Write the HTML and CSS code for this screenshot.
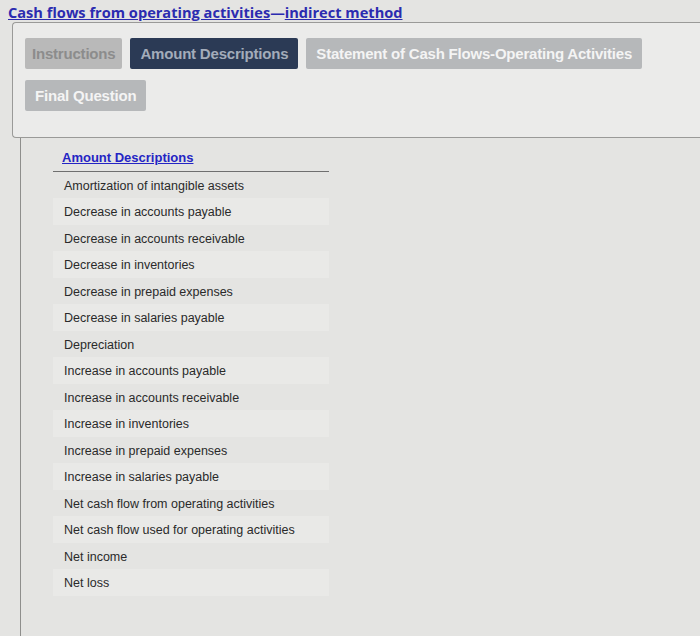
FILE: index.html
```html
<!DOCTYPE html>
<html lang="en">
<head>
    <meta charset="UTF-8">
    <title>Cash flows from operating activities</title>
    <link rel="stylesheet" href="styles.css">
</head>
<body>
    <!-- Page title -->
    <h1 class="page-title">
        <a href="#">Cash flows from operating activities</a>&mdash;<a href="#">indirect method</a>
    </h1>

    <!-- Tabs -->
    <div class="tab-panel">
        <div class="tab-list">
            <button class="tab first">Instructions</button>
            <button class="tab active">Amount Descriptions</button>
            <button class="tab light">Statement of Cash Flows-Operating Activities</button>
            <button class="tab light">Final Question</button>
        </div>
    </div>

    <!-- Tab content -->
    <div class="tab-content">
        <table class="amount-table">
            <thead>
                <tr><th><a href="#">Amount Descriptions</a></th></tr>
            </thead>
            <tbody>
                <tr><td>Amortization of intangible assets</td></tr>
                <tr><td>Decrease in accounts payable</td></tr>
                <tr><td>Decrease in accounts receivable</td></tr>
                <tr><td>Decrease in inventories</td></tr>
                <tr><td>Decrease in prepaid expenses</td></tr>
                <tr><td>Decrease in salaries payable</td></tr>
                <tr><td>Depreciation</td></tr>
                <tr><td>Increase in accounts payable</td></tr>
                <tr><td>Increase in accounts receivable</td></tr>
                <tr><td>Increase in inventories</td></tr>
                <tr><td>Increase in prepaid expenses</td></tr>
                <tr><td>Increase in salaries payable</td></tr>
                <tr><td>Net cash flow from operating activities</td></tr>
                <tr><td>Net cash flow used for operating activities</td></tr>
                <tr><td>Net income</td></tr>
                <tr><td>Net loss</td></tr>
            </tbody>
        </table>
    </div>
</body>
</html>
```

FILE: styles.css
```css
* {
    margin: 0;
    padding: 0;
    box-sizing: border-box;
}

body {
    background-color: #e4e4e2;
    color: #333;
    font-family: 'Liberation Sans', Arial, sans-serif;
    height: 636px;
    overflow: hidden;
}

.page-title {
    font-family: 'Open Sans', sans-serif;
    font-size: 14.6px;
    font-weight: 700;
    color: #2b2bb0;
    padding: 3px 8px 0;
    height: 22px;
    line-height: 18px;
}

.page-title a {
    color: #2b2bb0;
}

.tab-panel {
    margin-left: 12px;
    background: #ebebea;
    border: 1px solid #9a9a98;
    border-right: none;
    border-radius: 4px 0 0 4px;
    padding: 15px 12px 26px;
}

.tab-list {
    display: flex;
    flex-wrap: wrap;
    gap: 11px 8px;
}

.tab {
    font-family: 'Liberation Sans', Arial, sans-serif;
    font-size: 15px;
    font-weight: 700;
    letter-spacing: -0.2px;
    height: 31px;
    padding: 0 10px;
    border: none;
    border-radius: 2px;
    background: #b9b9b9;
    color: #8c8c8c;
}

.tab.first {
    padding: 0 7px;
}

.tab.active {
    background: #2b3a55;
    color: #a3acba;
}

.tab.light {
    color: #f4f4f4;
    background: #b6b8ba;
}

.tab-content {
    margin-left: 20px;
    border-left: 1px solid #8e8e8c;
    height: 520px;
    padding: 8px 0 0 32px;
}

.amount-table {
    width: 276px;
    border-collapse: collapse;
    font-size: 12.5px;
}

.amount-table th {
    text-align: left;
    font-size: 13px;
    font-weight: 700;
    padding: 4px 9px 6px;
    border-bottom: 1px solid #6f6f6f;
}

.amount-table th a {
    color: #2424c4;
}

.amount-table td {
    height: 26.5px;
    padding: 2px 11px 0;
    color: #2a2a2a;
}

.amount-table tbody tr:nth-child(even) td {
    background: #e9e9e7;
}
```
